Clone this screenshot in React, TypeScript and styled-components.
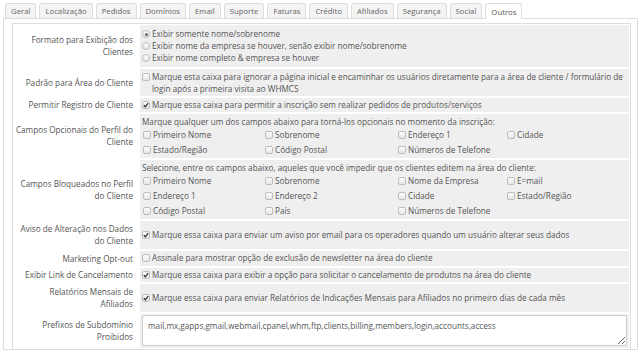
import React from 'react'
import styled, { createGlobalStyle } from 'styled-components'

const GlobalStyle = createGlobalStyle`
  html, body {
    margin: 0;
    padding: 0;
    background: #fff;
  }
  body {
    font-family: "Open Sans", "DejaVu Sans", sans-serif;
    font-size: 8.2px;
    color: #555;
    overflow: hidden;
  }
`

const Page = styled.div`
  width: 640px;
  height: 350px;
  padding: 3px 2px 0 3px;
  box-sizing: border-box;
  display: flex;
  flex-direction: column;
`

const TabBar = styled.div`
  display: flex;
  gap: 3px;
  padding-left: 2px;
  border-bottom: 1px solid #ddd;
  height: 15px;
`

const Tab = styled.div<{ $active?: boolean }>`
  box-sizing: border-box;
  padding: 0 5px;
  display: flex;
  align-items: center;
  border: 1px solid #ddd;
  border-bottom: none;
  border-radius: 3px 3px 0 0;
  font-size: 7.75px;
  background: ${p => (p.$active ? '#fff' : '#f4f4f4')};
  color: ${p => (p.$active ? '#555' : '#666')};
  height: ${p => (p.$active ? '16px' : '15px')};
  white-space: nowrap;
`

const Panel = styled.div`
  flex: 1;
  border: 1px solid #ddd;
  border-top: none;
  padding: 4px 6px 0 8px;
  overflow: hidden;
`

const FormTable = styled.div`
  display: grid;
  grid-template-columns: 124px 1fr;
  column-gap: 2px;
  row-gap: 2px;
  border: 1px solid #ddd;
  padding: 1px;
`

const Label = styled.div`
  text-align: right;
  padding: 1px 5px 1px 4px;
  display: flex;
  flex-direction: column;
  align-items: flex-end;
  justify-content: center;
  line-height: 12px;
  white-space: nowrap;
`

const Field = styled.div<{ $pad?: string }>`
  background: #efefef;
  padding: ${p => p.$pad || '1px 2px'};
  line-height: 12px;
  display: flex;
  flex-direction: column;
  justify-content: center;
`

const Option = styled.label`
  display: flex;
  align-items: flex-start;
  gap: 2px;
  line-height: 12px;
`

const Box = styled.span<{ $round?: boolean }>`
  flex: none;
  width: 6px;
  height: 6px;
  margin-top: 2px;
  border: 1px solid #bdbdbd;
  border-radius: ${p => (p.$round ? '50%' : '2px')};
  background: linear-gradient(#fdfdfd, #e6e6e6);
  display: flex;
  align-items: center;
  justify-content: center;
`

const Dot = styled.span`
  width: 3px;
  height: 3px;
  border-radius: 50%;
  background: #666;
`

const Intro = styled.div`
  line-height: 13px;
  margin-bottom: 1px;
`

const FieldGrid = styled.div`
  display: grid;
  grid-template-columns: 122px 133px 109px auto;
  row-gap: 3px;
  padding-left: 1px;
`

const TextArea = styled.textarea`
  display: block;
  width: 100%;
  height: 31px;
  box-sizing: border-box;
  margin: 0;
  border: 1px solid #ccc;
  border-radius: 2px;
  padding: 4px 5px;
  font-family: "Open Sans", "DejaVu Sans", sans-serif;
  font-size: 8.2px;
  color: #555;
  background: #fff;
  resize: vertical;
  outline: none;
`

const Check = ({ checked }: { checked?: boolean }) => (
  <Box>
    {checked && (
      <svg width="6" height="6" viewBox="0 0 6 6">
        <path d="M0.8 3.2 L2.4 4.8 L5.2 1.2" stroke="#333" strokeWidth="1.3" fill="none" />
      </svg>
    )}
  </Box>
)

const Radio = ({ checked }: { checked?: boolean }) => <Box $round>{checked && <Dot />}</Box>

const tabs = ['Geral', 'Localização', 'Pedidos', 'Domínios', 'Email', 'Suporte', 'Faturas', 'Crédito', 'Afiliados', 'Segurança', 'Social', 'Outros']

const optionalFields = ['Primeiro Nome', 'Sobrenome', 'Endereço 1', 'Cidade', 'Estado/Região', 'Código Postal', 'Números de Telefone']

const lockedFields = ['Primeiro Nome', 'Sobrenome', 'Nome da Empresa', 'E=mail', 'Endereço 1', 'Endereço 2', 'Cidade', 'Estado/Região', 'Código Postal', 'País', 'Números de Telefone']

const Row = ({ label, children, pad }: { label: string[]; children: React.ReactNode; pad?: string }) => (
  <>
    <Label>
      {label.map(l => (
        <span key={l}>{l}</span>
      ))}
    </Label>
    <Field $pad={pad}>{children}</Field>
  </>
)

export default function App() {
  return (
    <>
      <GlobalStyle />
      <Page>
        <TabBar>
          {tabs.map(t => (
            <Tab key={t} $active={t === 'Outros'}>{t}</Tab>
          ))}
        </TabBar>
        <Panel>
          <FormTable>
            <Row label={['Formato para Exibição dos', 'Clientes']} pad="3px 2px">
              <Option><Radio checked />Exibir somente nome/sobrenome</Option>
              <Option><Radio />Exibir nome da empresa se houver, senão exibir nome/sobrenome</Option>
              <Option><Radio />Exibir nome completo &amp; empresa se houver</Option>
            </Row>

            <Row label={['Padrão para Área do Cliente']} pad="2px 2px 1px">
              <Option>
                <Check />
                <span>Marque esta caixa para ignorar a página inicial e encaminhar os usuários diretamente para a área de cliente / formulário de login após a primeira visita ao WHMCS</span>
              </Option>
            </Row>

            <Row label={['Permitir Registro de Cliente']}>
              <Option><Check checked />Marque essa caixa para permitir a inscrição sem realizar pedidos de produtos/serviços</Option>
            </Row>

            <Row label={['Campos Opcionais do Perfil do', 'Cliente']} pad="1px 2px 2px">
              <Intro>Marque qualquer um dos campos abaixo para torná-los opcionais no momento da inscrição:</Intro>
              <FieldGrid>
                {optionalFields.map(f => (
                  <Option key={f}><Check />{f}</Option>
                ))}
              </FieldGrid>
            </Row>

            <Row label={['Campos Bloqueados no Perfil', 'do Cliente']} pad="1px 2px 2px">
              <Intro>Selecione, entre os campos abaixo, aqueles que você impedir que os clientes editem na área do cliente:</Intro>
              <FieldGrid>
                {lockedFields.map(f => (
                  <Option key={f}><Check />{f}</Option>
                ))}
              </FieldGrid>
            </Row>

            <Row label={['Aviso de Alteração nos Dados', 'do Cliente']} pad="8px 2px">
              <Option><Check checked />Marque essa caixa para enviar um aviso por email para os operadores quando um usuário alterar seus dados</Option>
            </Row>

            <Row label={['Marketing Opt-out']} pad="1px 2px 2px">
              <Option><Check />Assinale para mostrar opção de exclusão de newsletter na área do cliente</Option>
            </Row>

            <Row label={['Exibir Link de Cancelamento']}>
              <Option><Check checked />Marque essa caixa para exibir a opção para solicitar o cancelamento de produtos na área do cliente</Option>
            </Row>

            <Row label={['Relatórios Mensais de', 'Afiliados']} pad="8px 2px">
              <Option><Check checked />Marque essa caixa para enviar Relatórios de Indicações Mensais para Afiliados no primeiro dias de cada mês</Option>
            </Row>

            <Row label={['Prefixos de Subdomínio', 'Proibidos']} pad="1px 2px 2px">
              <TextArea defaultValue="mail,mx,gapps,gmail,webmail,cpanel,whm,ftp,clients,billing,members,login,accounts,access" />
            </Row>
          </FormTable>
        </Panel>
      </Page>
    </>
  )
}
